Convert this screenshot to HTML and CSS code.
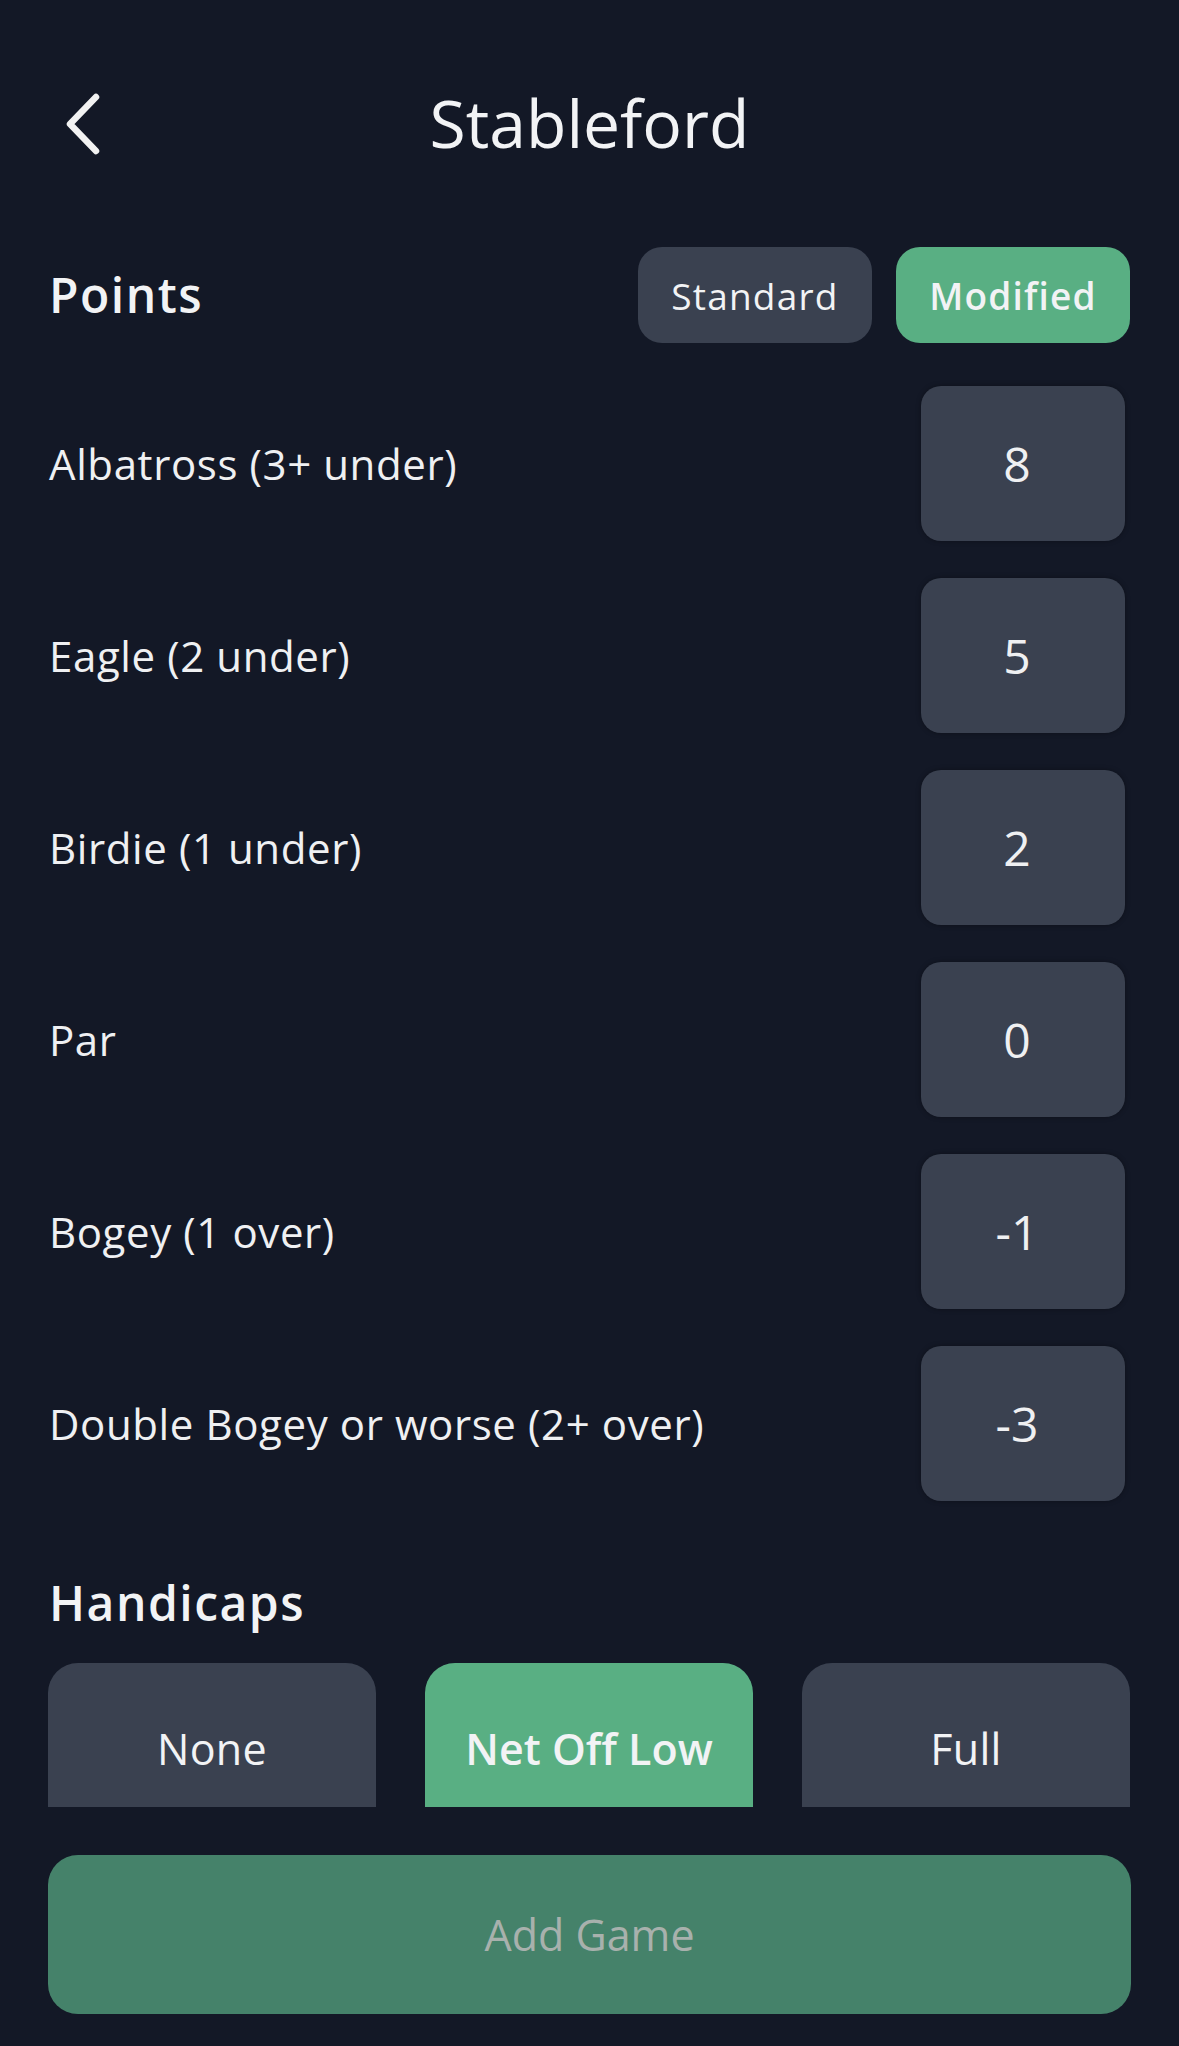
FILE: index.html
```html
<!DOCTYPE html>
<html lang="en">
<head>
<meta charset="utf-8">
<title>Stableford</title>
<link rel="stylesheet" href="styles.css">
</head>
<body>
<div class="screen">
  <header class="topbar">
    <div class="back">
      <svg width="40" height="62" viewBox="0 0 40 62" fill="none">
        <path d="M33 4 L7 31 L33 58" stroke="#f2f2f2" stroke-width="6.5" stroke-linecap="round" stroke-linejoin="round"/>
      </svg>
    </div>
    <h1 class="title">Stableford</h1>
    <div></div>
  </header>

  <section class="points-head">
    <h2 class="section-title">Points</h2>
    <div class="toggle">
      <button class="pill">Standard</button>
      <button class="pill active">Modified</button>
    </div>
  </section>

  <section class="rows">
    <div class="row"><span class="label">Albatross (3+ under)</span><span class="value">8</span></div>
    <div class="row"><span class="label">Eagle (2 under)</span><span class="value">5</span></div>
    <div class="row"><span class="label">Birdie (1 under)</span><span class="value">2</span></div>
    <div class="row"><span class="label">Par</span><span class="value">0</span></div>
    <div class="row"><span class="label">Bogey (1 over)</span><span class="value">-1</span></div>
    <div class="row"><span class="label">Double Bogey or worse (2+ over)</span><span class="value">-3</span></div>
  </section>

  <h2 class="section-title handicaps-title">Handicaps</h2>
  <section class="handicaps">
    <button class="hc">None</button>
    <button class="hc active">Net Off Low</button>
    <button class="hc">Full</button>
  </section>

  <button class="add-game">Add Game</button>
</div>
</body>
</html>
```

FILE: styles.css
```css
html, body {
  margin: 0;
  padding: 0;
  background: #131826;
}
body {
  font-family: "Open Sans", "Noto Sans", sans-serif;
  color: #f2f3f5;
  width: 1179px;
  height: 2046px;
  overflow: hidden;
}
.screen {
  padding: 0 49px 0 49px;
}
button {
  font-family: inherit;
  border: none;
  cursor: pointer;
}
.topbar {
  height: 247px;
  display: grid;
  grid-template-columns: 1fr auto 1fr;
  align-items: center;
  margin: 0 -49px;
}
.back {
  padding-left: 63px;
  display: flex;
  align-items: center;
}
.title {
  margin: 0;
  font-size: 66px;
  font-weight: 400;
  letter-spacing: 0;
  color: #f2f3f5;
  line-height: 1;
  padding-bottom: 4px;
}
.points-head {
  height: 96px;
  display: flex;
  align-items: center;
  justify-content: space-between;
}
.section-title {
  margin: 0;
  font-size: 48px;
  font-weight: 600;
  letter-spacing: 1.5px;
  line-height: 1.362;
  color: #f2f3f5;
}
.toggle {
  display: flex;
  gap: 24px;
}
.pill {
  width: 234px;
  height: 96px;
  border-radius: 24px;
  background: #3a4150;
  color: #f2f3f5;
  font-size: 37px;
  letter-spacing: 1.2px;
  font-weight: 400;
}
.pill.active {
  background: #59af83;
  font-weight: 600;
}
.rows {
  margin-top: 43px;
  display: flex;
  flex-direction: column;
  gap: 37px;
}
.row {
  height: 155px;
  display: flex;
  align-items: center;
  justify-content: space-between;
  padding-right: 5px;
}
.label {
  font-size: 42px;
  letter-spacing: 0.6px;
  color: #eff0f2;
}
.value {
  width: 204px;
  height: 155px;
  box-sizing: border-box;
  padding-right: 12px;
  border-radius: 20px;
  background: #3a4150;
  display: flex;
  align-items: center;
  justify-content: center;
  font-size: 48px;
  color: #eff0f2;
  box-shadow: 0 0 5px rgba(0, 0, 0, 0.35);
}
.handicaps-title {
  margin-top: 69px;
}
.handicaps {
  margin-top: 28px;
  display: grid;
  grid-template-columns: repeat(3, 1fr);
  gap: 49px;
  margin-left: -1px;
}
.hc {
  height: 144px;
  border-radius: 30px 30px 0 0;
  background: #3a4150;
  color: #f2f3f5;
  font-size: 43px;
  font-weight: 400;
  letter-spacing: 0.3px;
  padding: 26px 0 0 0;
  display: block;
}
.hc.active {
  background: #59af83;
  font-weight: 600;
  letter-spacing: 0;
}
.add-game {
  margin-top: 48px;
  margin-left: -1px;
  width: 1083px;
  height: 159px;
  border-radius: 30px;
  background: #45826a;
  color: #a8b1ad;
  font-size: 43px;
  letter-spacing: 0;
  display: block;
}
```
